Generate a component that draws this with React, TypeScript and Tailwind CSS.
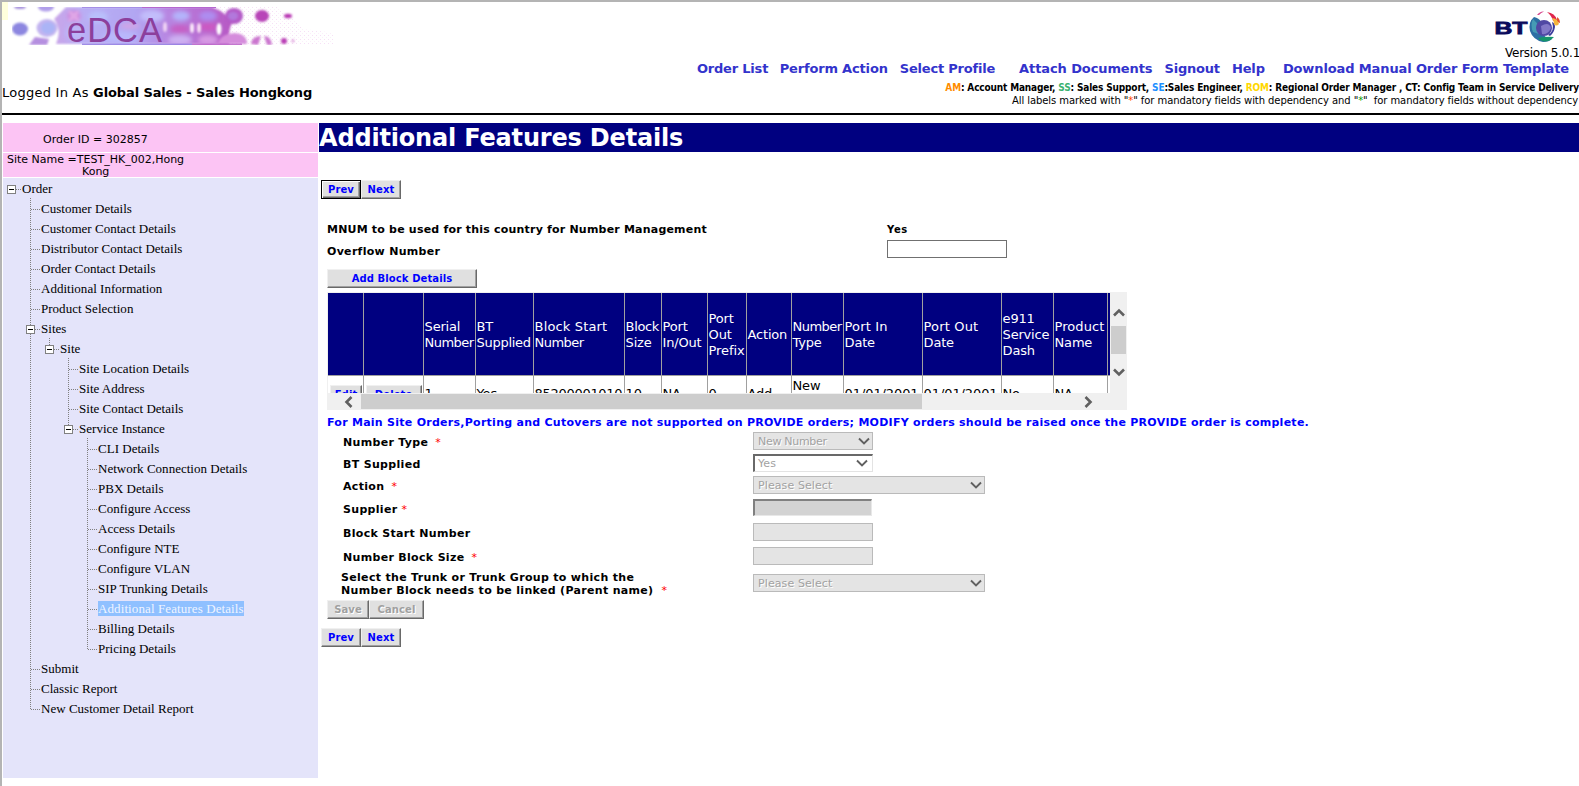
import React from "react";

const SANS = "font-['DejaVu_Sans','Liberation_Sans',sans-serif]";

function Banner() {
  return (
    <svg width="322" height="38" viewBox="0 0 322 38" className="block">
      <defs>
        <linearGradient id="band" x1="0" x2="1">
          <stop offset="0" stopColor="#c9a4e8" />
          <stop offset=".15" stopColor="#b9aef4" />
          <stop offset=".45" stopColor="#b2a6f2" />
          <stop offset=".66" stopColor="#b880de" />
          <stop offset="1" stopColor="#b755c2" />
        </linearGradient>
        <pattern id="speck" width="4" height="4" patternUnits="userSpaceOnUse">
          <rect width="1" height="1" fill="#f6e0f6" />
          <rect x="2" y="2" width="1" height="1" fill="#fbeffa" />
        </pattern>
        <filter id="soft"><feGaussianBlur stdDeviation=".8" /></filter>
        <filter id="soft2"><feGaussianBlur stdDeviation="2" /></filter>
      </defs>
      <path d="M206 0h60l26 22l30 4v12H206z" fill="url(#speck)" />
      <g filter="url(#soft)">
        <path d="M44 37Q48 27 46 20Q44 14 42 12L54 0H200Q208 3 214 8L224 12Q216 16 217 37Z" fill="url(#band)" />
        <path d="M17 38L23 30L37 32L35 38Z" fill="#b58fe0" />
        <ellipse cx="8" cy="0" rx="6" ry="2" fill="#a48fdc" />
        <ellipse cx="34" cy="0" rx="8" ry="4.500" fill="#b09eea" />
        <ellipse cx="8" cy="22" rx="8" ry="6.500" fill="#8c86e0" />
        <ellipse cx="35" cy="21" rx="10.500" ry="9" fill="#c2b4f0" />
        <ellipse cx="36" cy="21" rx="7" ry="6" fill="#abb4f6" />
      </g>
      <g filter="url(#soft2)">
        <ellipse cx="62" cy="9" rx="7" ry="5" fill="#d38ade" />
        <ellipse cx="86" cy="10" rx="10" ry="6" fill="#b9c0fb" />
        <ellipse cx="62" cy="26" rx="9" ry="7" fill="#bcb6f8" />
        <ellipse cx="108" cy="30" rx="18" ry="6" fill="#b9b8fb" />
        <ellipse cx="118" cy="19" rx="10" ry="3" fill="#d2a5e6" />
        <ellipse cx="140" cy="9" rx="12" ry="6" fill="#c2bdfb" />
        <ellipse cx="169" cy="9" rx="9" ry="5" fill="#b4b4fb" />
        <ellipse cx="196" cy="9" rx="9" ry="5" fill="#ae8df0" />
        <ellipse cx="168" cy="22" rx="10" ry="4" fill="#c65fc4" />
        <ellipse cx="196" cy="20" rx="9" ry="4" fill="#cc58c2" />
        <ellipse cx="168" cy="33" rx="12" ry="5" fill="#cdb0f2" />
        <ellipse cx="196" cy="33" rx="10" ry="5" fill="#d79ae4" />
      </g>
      <g filter="url(#soft)">
        <path d="M56 3l6 3 5-3-2 6 3 6-6-3-6 3 3-6z" fill="#dfa6e6" />
        <ellipse cx="153" cy="20" rx="2" ry="5" fill="#f0d4f4" />
        <ellipse cx="180" cy="21" rx="2" ry="5" fill="#fbeafa" />
        <ellipse cx="187" cy="21" rx="2" ry="5" fill="#f7dcf5" />
        <ellipse cx="207" cy="22" rx="2.500" ry="6" fill="#fff" />
        <ellipse cx="222" cy="9" rx="9" ry="8" fill="#b45cc8" />
        <ellipse cx="221" cy="9" rx="5" ry="4" fill="#b278dc" />
        <path d="M206 37q2-10 17-11 12 1 12 11z" fill="#d58cdc" />
        <ellipse cx="250" cy="9" rx="7" ry="6" fill="#b845b8" />
        <ellipse cx="276" cy="9" rx="4" ry="2.200" fill="#b836b2" />
        <path d="M239 37q1-8 10-8l-3 9zM252 29q7 0 8 9h-5z" fill="#cb76cf" />
        <circle cx="272" cy="34" r="3" fill="#b93db5" />
        <circle cx="281" cy="34" r="1.400" fill="#d98bd5" />
      </g>
      <path d="M70 37.200h110" stroke="#7f66dc" strokeWidth="1" />
      <path d="M180 37.200h50" stroke="#b04cc0" strokeWidth="1" />
      <path d="M70 .5h60" stroke="#a58fe6" strokeWidth="1" />
      <path d="M130 .5h74" stroke="#b467cf" strokeWidth="1" />
      <text x="55" y="34.500" fontSize="34.500" letterSpacing="1" fontFamily="'Liberation Sans', sans-serif" fill="#8c3f9c">eDCA</text>
    </svg>
  );
}

function BtLogo() {
  return (
    <svg width="68" height="34" viewBox="0 0 68 34" className="block">
      <text x="-.5" y="22.500" fontSize="17" fontWeight="700" textLength="33" lengthAdjust="spacingAndGlyphs" fontFamily="'Liberation Sans', sans-serif" fill="#0a0a5c" stroke="#0a0a5c" strokeWidth=".8">BT</text>
      <path d="M39 6q-6 5-4 14 3 9 13 11 6 0 9-3-8-1-10-7 2-13-8-15z" fill="#2d6fa4" />
      <path d="M38 8q-3 6 0 13l6 2q2-8-6-15z" fill="#459bb4" />
      <circle cx="49" cy="17" r="8" fill="#5048a4" />
      <path d="M46 15q8-5 10 2-3 7-9 6z" fill="#8278c8" />
      <path d="M53 24q7-4 4-13 3 1 3 5-1 6-5 9z" fill="#3a3a9c" />
      <path d="M43 27q9-2 16-1-5 5-10 4.500-4-.5-6-3.500z" fill="#16946a" />
      <path d="M42 4q3-4 7-3.500-3 1-5 3.500z" fill="#d6468c" />
      <path d="M52 1q8 1 10 8l-4 1q-1-5-6-9z" fill="#e0264c" />
      <path d="M62 6q3 2 3 6l-3-1z" fill="#e3522e" />
      <path d="M57 7q5 0 7 6-3 3-5 0 0-3-2-6z" fill="#f4b53c" />
    </svg>
  );
}

type Node = { t: string; d: number; box?: boolean; trunks: number[]; last?: boolean; active?: boolean };
const nodes: Node[] = [
  { t: "Order", d: 0, box: true, trunks: [] },
  { t: "Customer Details", d: 1, trunks: [1] },
  { t: "Customer Contact Details", d: 1, trunks: [1] },
  { t: "Distributor Contact Details", d: 1, trunks: [1] },
  { t: "Order Contact Details", d: 1, trunks: [1] },
  { t: "Additional Information", d: 1, trunks: [1] },
  { t: "Product Selection", d: 1, trunks: [1] },
  { t: "Sites", d: 1, box: true, trunks: [1] },
  { t: "Site", d: 2, box: true, trunks: [1], last: true },
  { t: "Site Location Details", d: 3, trunks: [1, 3] },
  { t: "Site Address", d: 3, trunks: [1, 3] },
  { t: "Site Contact Details", d: 3, trunks: [1, 3] },
  { t: "Service Instance", d: 3, box: true, trunks: [1], last: true },
  { t: "CLI Details", d: 4, trunks: [1, 4] },
  { t: "Network Connection Details", d: 4, trunks: [1, 4] },
  { t: "PBX Details", d: 4, trunks: [1, 4] },
  { t: "Configure Access", d: 4, trunks: [1, 4] },
  { t: "Access Details", d: 4, trunks: [1, 4] },
  { t: "Configure NTE", d: 4, trunks: [1, 4] },
  { t: "Configure VLAN", d: 4, trunks: [1, 4] },
  { t: "SIP Trunking Details", d: 4, trunks: [1, 4] },
  { t: "Additional Features Details", d: 4, trunks: [1, 4], active: true },
  { t: "Billing Details", d: 4, trunks: [1, 4] },
  { t: "Pricing Details", d: 4, trunks: [1], last: true },
  { t: "Submit", d: 1, trunks: [1] },
  { t: "Classic Report", d: 1, trunks: [1] },
  { t: "New Customer Detail Report", d: 1, trunks: [], last: true },
];

function TreeRow({ n }: { n: Node }) {
  const w = 19 + 19 * n.d;
  const x = 8.5 + 19 * n.d;
  return (
    <div className="flex h-5 items-center">
      <svg width={w} height="20" className="block shrink-0">
        <g stroke="#808080" strokeWidth="1" strokeDasharray="1 1" shapeRendering="crispEdges">
          {n.trunks.map((k) => <path key={k} d={`M${8.5 + 19 * k} 0V20`} />)}
          {n.last && <path d={`M${x} 0V11`} />}
          <path d={`M${x} 11.500H${w}`} />
        </g>
        {n.box && (
          <g shapeRendering="crispEdges">
            <rect x={x - 4} y="7.500" width="8" height="8" fill="#fff" stroke="#808080" />
            <path d={`M${x - 2.5} 11.500h5`} stroke="#000" />
          </g>
        )}
      </svg>
      <span className={"whitespace-nowrap leading-[15px] " + (n.active ? "bg-[#8fc0ff] tracking-[0.1px] text-[#eef4ff]" : "tracking-[0.02px] text-black")}>{n.t}</span>
    </div>
  );
}

function Btn({ children, w, focused, disabled }: { children: string; w: string; focused?: boolean; disabled?: boolean }) {
  return (
    <button
      className={
        `${w} flex h-[19px] shrink-0 items-center justify-center whitespace-nowrap bg-[#e0e0e0] pt-px text-[10px] leading-none font-bold tracking-[0.1px] ` +
        (focused
          ? "border border-black shadow-[inset_1px_1px_0_#fff,inset_-1px_-1px_0_#696969,inset_-2px_-2px_0_#a0a0a0] "
          : "border-t border-r border-b border-l border-t-[#f0f0f0] border-r-[#696969] border-b-[#696969] border-l-[#f0f0f0] shadow-[inset_-1px_-1px_0_#a0a0a0] ") +
        (disabled ? "text-[#a0a0a0] [text-shadow:1px_1px_0_#fff]" : "text-[#0000ff]")
      }
    >
      {children}
    </button>
  );
}

function Arrow({ rot }: { rot: string }) {
  return (
    <svg width="12" height="12" viewBox="0 0 12 12" className={`block shrink-0 ${rot}`}>
      <path d="M1 8.500L6 3.500l5 5" fill="none" stroke="#606060" strokeWidth="2.600" />
    </svg>
  );
}

const cols: { w: string; h: string[]; v: string[] }[] = [
  { w: "w-[60px]", h: ["", ""], v: [] },
  { w: "w-[52px]", h: ["Serial", "Number"], v: ["1"] },
  { w: "w-[58px]", h: ["BT", "Supplied"], v: ["Yes"] },
  { w: "w-[91px]", h: ["Block Start", "Number"], v: ["85200001010"] },
  { w: "w-[37px]", h: ["Block", "Size"], v: ["10"] },
  { w: "w-[46px]", h: ["Port", "In/Out"], v: ["NA"] },
  { w: "w-[39px]", h: ["Port", "Out", "Prefix"], v: ["0"] },
  { w: "w-[45px]", h: ["Action"], v: ["Add"] },
  { w: "w-[52px]", h: ["Number", "Type"], v: ["New", "Number"] },
  { w: "w-[79px]", h: ["Port In", "Date"], v: ["01/01/2001"] },
  { w: "w-[79px]", h: ["Port Out", "Date"], v: ["01/01/2001"] },
  { w: "w-[52px]", h: ["e911", "Service", "Dash"], v: ["No"] },
  { w: "w-[54px]", h: ["Product", "Name"], v: ["NA"] },
];

const tracking: Record<string, string> = {
  "Block Start": "tracking-[0.15px]",
  "Port Out": "tracking-[0.15px]",
  "Port In": "tracking-[0.15px]",
  Number: "tracking-[-0.55px]",
  Supplied: "tracking-[-0.3px]",
  Block: "tracking-[-0.35px]",
  Product: "tracking-[0.05px]",
  Prefix: "tracking-[-0.1px]",
  "85200001010": "tracking-[-0.3px]",
  "01/01/2001": "tracking-[-0.1px]",
};

function BlockTable() {
  return (
    <div className="mt-[4px] ml-2 flex h-[118px] w-[800px] flex-col bg-[#f0f0f0] text-[13px] leading-4 tracking-[-0.2px]">
      <div className="flex h-[101px]">
        <div className="flex w-[783px] flex-col overflow-hidden pt-px pl-px">
          <div className="flex h-[82px] shrink-0 bg-[#000080] text-white">
            <div className="w-[36px] shrink-0 border-r border-[#a0a0a0]" />
            {cols.map((c, i) => (
              <div key={i} className={`${c.w} flex shrink-0 flex-col justify-center border-r border-[#a0a0a0] pt-px pl-[0.6px] whitespace-nowrap`}>
                {c.h.map((s, j) => <span key={j} className={tracking[s] ?? ""}>{s}</span>)}
              </div>
            ))}
          </div>
          <div className="flex h-[37px] shrink-0 border-t border-[#a0a0a0] bg-white text-black">
            <div className="flex w-[36px] shrink-0 items-center border-r border-[#a0a0a0] pl-0.5"><Btn w="w-8">Edit</Btn></div>
            {cols.map((c, i) => (
              <div key={i} className={`${c.w} flex shrink-0 flex-col justify-center border-r border-[#a0a0a0] pl-[0.6px] whitespace-nowrap`}>
                {i === 0 ? <div className="pl-px"><Btn w="w-14">Delete</Btn></div> : c.v.map((s) => <span key={s} className={tracking[s] ?? ""}>{s}</span>)}
              </div>
            ))}
          </div>
        </div>
        <div className="flex w-[17px] flex-col items-center pt-[15px]">
          <Arrow rot="" />
          <div className="mt-[7px] mb-3 h-7 w-[15px] bg-[#cdcdcd]" />
          <Arrow rot="rotate-180" />
        </div>
      </div>
      <div className="flex h-[17px] items-center">
        <div className="ml-[16px]"><Arrow rot="-rotate-90" /></div>
        <div className="ml-[6px] h-[15px] w-[561px] bg-[#cdcdcd]" />
        <div className="ml-[160px]"><Arrow rot="rotate-90" /></div>
      </div>
    </div>
  );
}

function Select({ w, children, sunken }: { w: string; children: string; sunken?: boolean }) {
  return (
    <div
      className={
        `${w} flex h-[18px] items-center justify-between pl-1 text-[11px] leading-none text-[#a2a2a2] ` +
        (sunken
          ? "border-t-2 border-r border-b border-l-2 border-t-[#696969] border-r-[#e3e3e3] border-b-[#e3e3e3] border-l-[#696969] bg-white pr-[4px] pl-[3px]"
          : "border border-[#bababa] bg-[#e4e4e4] pr-[2px] [text-shadow:1px_1px_0_#fff]")
      }
    >
      <span className={children === "New Number" ? "tracking-[-0.3px]" : "tracking-[0.1px]"}>{children}</span>
      <svg width="12" height="9" viewBox="0 0 12 9"><path d="M1 1.500l5 5L11 1.500" fill="none" stroke="#606060" strokeWidth="1.900" /></svg>
    </div>
  );
}

function Field({ h, label, star, gap, children }: { h: string; label: string; star?: boolean; gap?: string; children: React.ReactNode }) {
  return (
    <div className={`${h} flex items-center`}>
      <div className="ml-6 w-[410px] pt-[3px] text-[11px] leading-[13px] font-bold tracking-[0.32px] whitespace-nowrap">
        {label}
        {star && <span className={`${gap ?? "ml-[7px]"} text-[11px] font-normal text-[#ff0000]`}>*</span>}
      </div>
      {children}
    </div>
  );
}

const Flat = () => <div className="h-[18px] w-[120px] border border-[#bababa] bg-[#e4e4e4]" />;

export default function App() {
  return (
    <div className={`${SANS} h-[786px] w-[1579px] overflow-hidden border-t-2 border-l-2 border-t-[#b4b4b4] border-l-[#b4b4b4] bg-white text-black`}>
      <header className="flex h-[113px] justify-between border-b-2 border-black">
        <div className="flex w-[420px] flex-col">
          <div className="flex">
            <div className="h-[18px] w-1.5 bg-[#ffffdc]" />
            <div className="pt-[5px] pl-1"><Banner /></div>
          </div>
          <div className="mt-10 text-[13px] leading-4 whitespace-pre">
            <span className="tracking-[0.25px]">Logged In As </span>
            <b className="tracking-[-0.12px]">Global Sales - Sales Hongkong</b>
          </div>
        </div>
        <div className="flex w-[900px] flex-col items-end whitespace-pre">
          <div className="mt-[9px] mr-4 h-[34px]"><BtLogo /></div>
          <div className="-mr-px text-[12px] leading-4 tracking-[-0.27px]">Version 5.0.1</div>
          <nav className="-mt-px mr-2.5 flex text-[13px] leading-[18px] font-bold tracking-[-0.12px] text-[#3333cc]">
            <a className="mr-[11.5px] tracking-[-0.2px]">Order List</a>
            <a className="mr-3 tracking-[-0.17px]">Perform Action</a>
            <a className="mr-6 tracking-[-0.2px]">Select Profile</a>
            <a className="mr-3 tracking-[-0.1px]">Attach Documents</a>
            <a className="mr-3 tracking-[-0.2px]">Signout</a>
            <a className="mr-[18px]">Help</a>
            <a>Download Manual Order Form Template</a>
          </nav>
          <div className="mt-[4px] font-['DejaVu_Sans_Condensed','DejaVu_Sans',sans-serif] text-[10px] leading-3 font-bold tracking-[-0.156px]">
            <span className="text-[#ff8c00]">AM</span>: Account Manager, <span className="text-[#3cb371]">SS</span>: Sales Support, <span className="text-[#1e90ff]">SE</span>:Sales Engineer, <span className="text-[#ffd700]">ROM</span>: Regional Order Manager , CT: Config Team in Service Delivery
          </div>
          <div className="mt-px mr-px text-[10px] leading-3 tracking-[-0.078px]">
            All labels marked with "<span className="text-[#ff4500]">*</span>" for mandatory fields with dependency and "<span className="text-[#00a000]">*</span>"{"  "}for mandatory fields without dependency
          </div>
        </div>
      </header>

      <div className="mt-2 flex">
        <aside className="ml-px w-[315px] shrink-0 text-[11px]">
          <div className="flex h-[29px] items-center bg-[#fcc4f4] pt-1.5 pl-10">Order ID = 302857</div>
          <div className="mt-px h-6 bg-[#fcc4f4] pl-1 leading-3">
            <div className="pt-px">Site Name =TEST_HK_002,Hong</div>
            <div className="pl-[75px]">Kong</div>
          </div>
          <div className="mt-px h-[600px] bg-[#e4e4fa] font-['Liberation_Serif',serif] text-[13px]">
            {nodes.map((n) => <TreeRow key={n.t} n={n} />)}
          </div>
        </aside>

        <main className="ml-px flex-1">
          <h1 className="h-[29px] bg-[#000080] text-[24px] leading-[31px] font-bold tracking-[-0.18px] text-white">Additional Features Details</h1>
          <div className="mt-[28px] ml-0.5 flex"><Btn w="w-10" focused>Prev</Btn><Btn w="w-10">Next</Btn></div>

          <div className="mt-[19px] ml-2 flex h-[22px] items-center font-bold">
            <div className="w-[560px] pt-0.5 text-[11px] tracking-[0.2px]">MNUM to be used for this country for Number Management</div>
            <div className="pt-px text-[10px] tracking-[0.6px]">Yes</div>
          </div>
          <div className="ml-2 flex h-[18px] items-center">
            <div className="w-[560px] pt-1.5 text-[11px] font-bold tracking-[0.3px]">Overflow Number</div>
            <div className="h-[18px] w-[120px] border border-[#707070]" />
          </div>
          <div className="mt-[11px] ml-2"><Btn w="w-[150px]">Add Block Details</Btn></div>
          <BlockTable />
          <div className="ml-2 h-5 pt-px text-[11px] leading-[23px] font-bold tracking-[0.265px] whitespace-nowrap text-[#0000ff]">
            For Main Site Orders,Porting and Cutovers are not supported on PROVIDE orders; MODIFY orders should be raised once the PROVIDE order is complete.
          </div>

          <Field h="h-[22px]" label="Number Type" star><Select w="w-[120px]">New Number</Select></Field>
          <Field h="h-[22px]" label="BT Supplied"><Select w="w-[120px]" sunken>Yes</Select></Field>
          <Field h="h-[22px]" label="Action" star><Select w="w-[232px]">Please Select</Select></Field>
          <Field h="h-[23px]" label="Supplier" star gap="ml-1">
            <div className="h-[17px] w-[119px] border-t-2 border-r border-b border-l-2 border-t-[#808080] border-r-[#e8e8e8] border-b-[#e8e8e8] border-l-[#808080] bg-[#d3d3d3]" />
          </Field>
          <Field h="h-[26px]" label="Block Start Number"><Flat /></Field>
          <Field h="h-[22px]" label="Number Block Size" star><Flat /></Field>
          <div className="flex h-8 items-center">
            <div className="ml-[22px] w-[412px] pt-0.5 text-[11px] leading-[13px] font-bold tracking-[0.32px] whitespace-nowrap">
              Select the Trunk or Trunk Group to which the<br />
              Number Block needs to be linked (Parent name)
              <span className="ml-2 text-[11px] font-normal text-[#ff0000]">*</span>
            </div>
            <Select w="w-[232px]">Please Select</Select>
          </div>
          <div className="mt-px ml-2 flex"><Btn w="w-[42px]" disabled>Save</Btn><Btn w="w-[55px]" disabled>Cancel</Btn></div>
          <div className="mt-[9px] ml-0.5 flex"><Btn w="w-10">Prev</Btn><Btn w="w-10">Next</Btn></div>
        </main>
      </div>
    </div>
  );
}
